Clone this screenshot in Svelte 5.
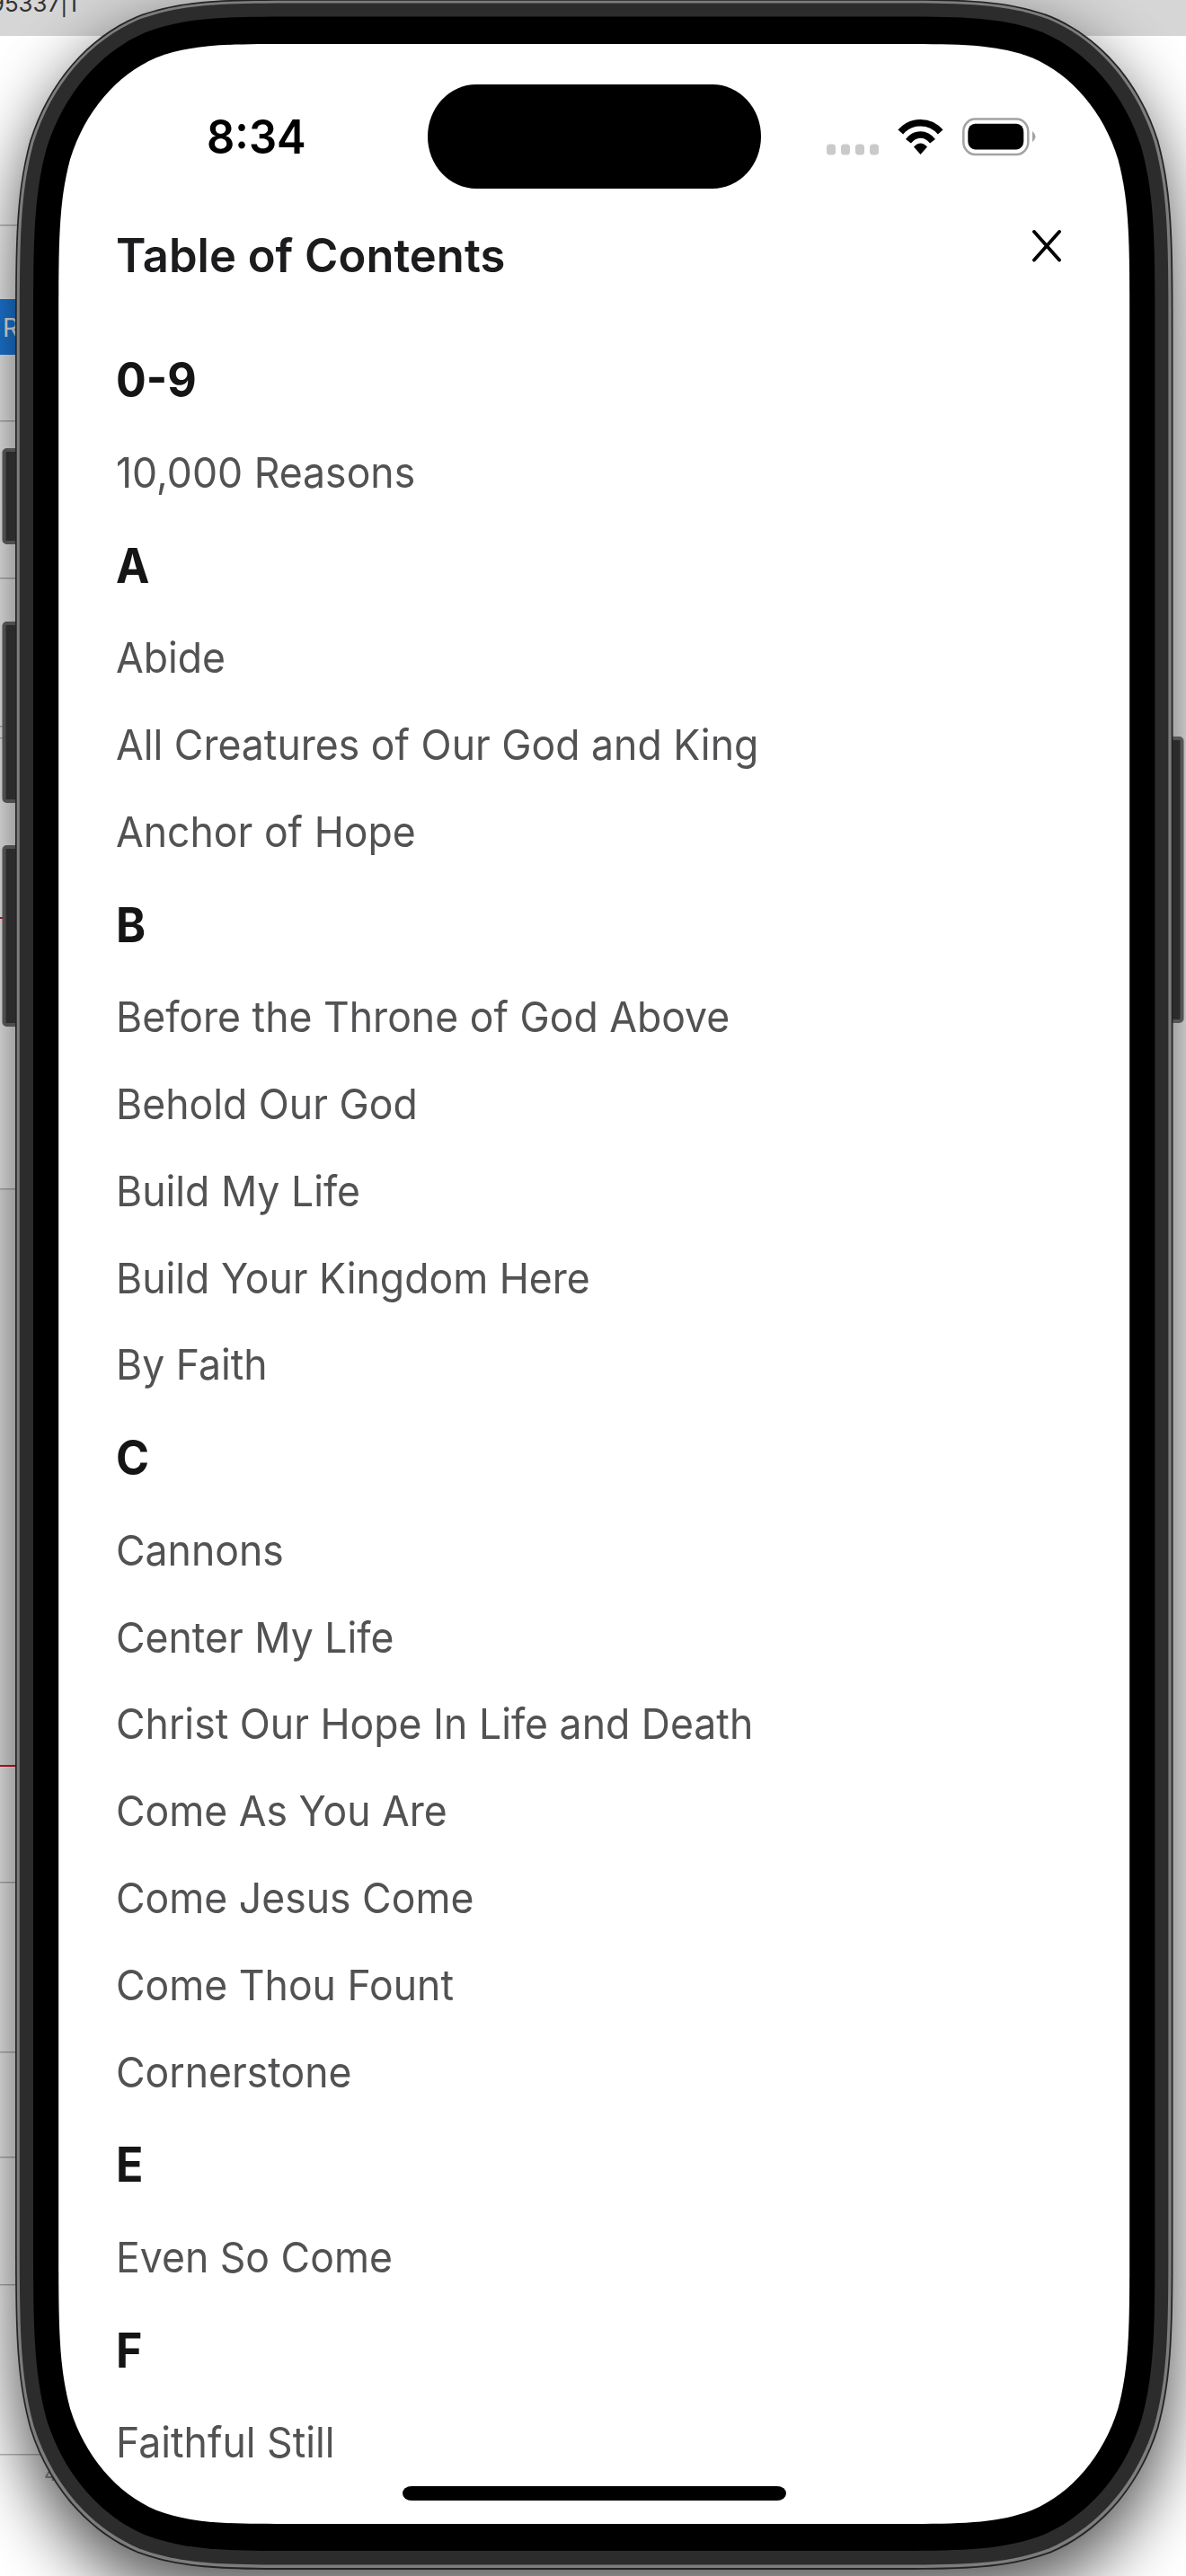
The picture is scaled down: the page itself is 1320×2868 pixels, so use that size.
<script>
  const groups = [
    { letter: '0-9', songs: ['10,000 Reasons'] },
    { letter: 'A', songs: ['Abide', 'All Creatures of Our God and King', 'Anchor of Hope'] },
    { letter: 'B', songs: ['Before the Throne of God Above', 'Behold Our God', 'Build My Life', 'Build Your Kingdom Here', 'By Faith'] },
    { letter: 'C', songs: ['Cannons', 'Center My Life', 'Christ Our Hope In Life and Death', 'Come As You Are', 'Come Jesus Come', 'Come Thou Fount', 'Cornerstone'] },
    { letter: 'E', songs: ['Even So Come'] },
    { letter: 'F', songs: ['Faithful Still'] },
  ];

  // Continuous-curvature rounded rectangle, as used for device outlines.
  function squircle(x, y, r, b, rx, ry) {
    const k = [1.528665, 1.088493, 0.868407, 0.631494, 0.372824, 0.16906, 0.074911, 0];
    const corner = (cx, cy, sx, sy, flip) => {
      const seq = [[7, 0], [7, 1], [7, 2], [6, 3], [5, 4], [4, 5], [3, 6], [2, 7], [1, 7], [0, 7]];
      const pts = (flip ? seq.slice().reverse() : seq).map(
        ([a, c]) => `${(cx + sx * k[a] * rx).toFixed(2)} ${(cy + sy * k[c] * ry).toFixed(2)}`
      );
      return `L${pts[0]}C${pts.slice(1, 4).join(' ')}C${pts.slice(4, 7).join(' ')}C${pts.slice(7).join(' ')}`;
    };
    return ('M' + (corner(x, y, 1, 1, false) + corner(r, y, -1, 1, true) + corner(r, b, -1, -1, false) + corner(x, b, 1, -1, true)).slice(1)) + 'Z';
  }

  const rules = [250, 468, 643, 808, 821, 1323, 2095, 2284, 2401, 2543, 2732];
  const redRules = [1021, 1965];
  const leftButtons = [[499, 107], [692, 202], [941, 202]];
</script>

<div class="stage">
  <svg class="device" viewBox="0 0 1320 2868" aria-hidden="true">
    <defs>
      <filter id="soft" x="-20%" y="-20%" width="140%" height="140%">
        <feGaussianBlur stdDeviation="36 42" />
      </filter>
    </defs>
    <rect width="1320" height="2868" fill="#fff" />
    <rect width="1320" height="40" fill="#d6d6d6" />
    <rect y="1323" width="60" height="642" fill="#f3f3f3" />
    {#each rules as y}
      <rect x="0" {y} width="90" height="1.5" fill="#bbb" />
    {/each}
    {#each redRules as y}
      <rect x="0" {y} width="40" height="2" fill="#e0142c" />
    {/each}
    <rect x="0" y="333" width="30" height="62" fill="#1f82ea" />
    <text class="behind r" x="3" y="375">R</text>
    <text class="behind" x="-11" y="12.500" textLength="97" lengthAdjust="spacingAndGlyphs">95337|1</text>
    <text class="behind four" x="49" y="2762">4</text>
    <path d={squircle(16, 30, 1306, 2890, 215, 250)} fill="#000" opacity="0.7" filter="url(#soft)" />
    {#each leftButtons as [y, h]}
      <rect x="4.500" y={y + 2} width="24" height={h - 4} rx="3" fill="#2b2b2b" stroke="#4e4e4e" stroke-width="4" />
    {/each}
    <rect x="1290" y="822" width="25.500" height="315" rx="3" fill="#2b2b2b" stroke="#555" stroke-width="4" />
    <path d={squircle(17, -1, 1305.5, 2861, 215, 250)} fill="#242424" />
    <path d={squircle(18.7, 0.8, 1303.7, 2859, 213, 248)} fill="#7d7d7d" />
    <path d={squircle(21.8, 3.5, 1300.4, 2855.5, 210, 245)} fill="#2c2c2c" />
    <path d={squircle(37, 18.5, 1285.4, 2840, 198, 232)} fill="#000" />
    <path d={squircle(65.2, 49, 1257.2, 2810, 172, 203)} fill="#fff" />
  </svg>

  <main class="screen">
    <div class="status">
      <time class="clock">8:34</time>
      <div class="island"></div>
      <svg class="icons" viewBox="0 0 240 60" aria-hidden="true">
        <g fill="#cacaca">
          <rect x="4" y="38.500" width="10" height="12" rx="3.500" />
          <rect x="20" y="38.500" width="10" height="12" rx="3.500" />
          <rect x="36" y="38.500" width="10" height="12" rx="3.500" />
          <rect x="52" y="38.500" width="10" height="12" rx="3.500" />
        </g>
        <g fill="none" stroke="#000" stroke-width="7.500">
          <path d="M86.300 25C98 11.200 119 11.200 130.700 25" />
          <path d="M95 35.200C102.500 25.500 114.500 25.500 122 35.200" />
        </g>
        <path d="M101 41.500Q108.500 33.500 116 41.500L108.500 50Z" />
        <rect x="156.300" y="10.500" width="72" height="39.500" rx="13" ry="14" fill="none" stroke="#a3a3a3" stroke-width="2.500" />
        <rect x="161.300" y="15.700" width="62" height="28.800" rx="8" ry="9" />
        <path d="M233 24Q236.500 27 236.500 30.200Q236.500 33 233 36.200Z" fill="#a3a3a3" />
      </svg>
    </div>

    <header>
      <h1>Table of Contents</h1>
      <button aria-label="Close">
        <svg viewBox="0 0 32 36"><path d="M2 2L30 33.500M30 2L2 33.500" /></svg>
      </button>
    </header>

    <nav>
      {#each groups as group}
        <h2>{group.letter}</h2>
        <ul>
          {#each group.songs as song}
            <li><span>{song}</span></li>
          {/each}
        </ul>
      {/each}
    </nav>
    <div class="home"></div>
  </main>
</div>

<style>
  :global(body) { margin: 0; }
  .stage {
    display: grid;
    width: 1320px;
    height: 2868px;
    overflow: hidden;
    font-family: Inter, 'Liberation Sans', sans-serif;
  }
  .device, .screen { grid-area: 1 / 1; }
  .device { width: 1320px; height: 2868px; display: block; }
  .behind { font-size: 26px; fill: #333; }
  .r { fill: #fff; font-size: 28px; }
  .four { fill: #999; font-size: 22px; }
  .screen {
    position: relative;
    box-sizing: border-box;
    margin: 49px 63px 58px 65px;
    padding: 0 0 0 64px;
    display: flex;
    flex-direction: column;
  }
  .status {
    display: flex;
    height: 182px;
    align-items: flex-start;
  }
  .clock {
    width: 347px;
    padding: 73px 0 0 101px;
    box-sizing: border-box;
    font-size: 52px;
    line-height: 62px;
    font-weight: 600;
    transform-origin: 101px 0;
    transform: scaleX(0.94);
  }
  .island {
    width: 371px;
    height: 116px;
    margin-top: 45px;
    border-radius: 54px / 58px;
    background: #000;
    flex: none;
  }
  .icons { width: 240px; height: 60px; margin: 73px 0 0 69px; flex: none; }
  header { display: flex; height: 137.2px; justify-content: space-between; }
  h1 {
    margin: 0;
    padding-top: 23px;
    font-size: 52px;
    line-height: 62px;
    font-weight: 600;
    color: #1c1c1e;
    white-space: nowrap;
    transform-origin: 0 0;
    transform: scaleX(0.976);
  }
  button {
    appearance: none;
    border: 0;
    background: none;
    padding: 0;
    margin: 24.500px 76px 0 0;
    width: 32px;
    height: 36px;
  }
  button svg { display: block; width: 32px; height: 36px; }
  button path { fill: none; stroke: #000; stroke-width: 3.8; stroke-linecap: round; }
  h2 {
    margin: 0;
    height: 109.6px;
    line-height: 111px;
    font-size: 53px;
    font-weight: 700;
    color: #151515;
    transform-origin: 0 0;
    transform: scaleX(0.945);
  }
  ul { margin: 0; padding: 0; list-style: none; }
  li {
    height: 96.8px;
    line-height: 96.8px;
    font-size: 47px;
    font-weight: 400;
    color: #525254;
    white-space: nowrap;
  }
  span { display: inline-block; transform-origin: 0 0; transform: scaleX(0.948); }
  .home {
    position: absolute;
    left: 383px;
    bottom: 26px;
    width: 427px;
    height: 16px;
    border-radius: 10px / 8px;
    background: #000;
  }
</style>
